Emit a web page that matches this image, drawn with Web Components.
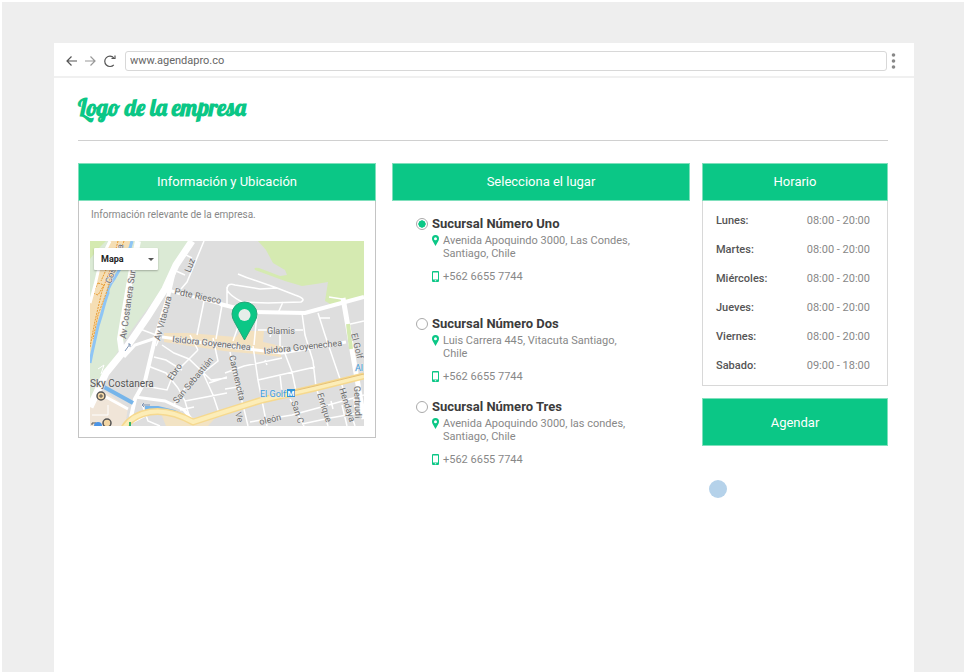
<!DOCTYPE html>
<html lang="es">
<head>
<meta charset="utf-8">
<meta name="viewport" content="width=device-width, initial-scale=1">
<title>AgendaPro</title>
<style>
  body {
    margin: 0;
    padding: 2px 2px 0;
    background: #fff;
    color: #888;
    font: 11px/13px Roboto, "Liberation Sans", sans-serif;
    --green: #0bc786;
    --line: #d8d8d8;
  }
  .stage {
    box-sizing: border-box;
    display: flex;
    min-height: calc(100vh - 2px);
    padding: 41px 50px 0 52px;
    background: #eee;
  }
</style>
</head>
<body>

<div class="stage">
  <browser-window url="www.agendapro.co">
    <company-page>
      <info-panel slot="main" heading="Información y Ubicación" framed>
        <p>Información relevante de la empresa.</p>
        <location-map></location-map>
      </info-panel>
      <info-panel slot="main" heading="Selecciona el lugar">
        <branch-picker></branch-picker>
      </info-panel>
      <info-panel slot="side" heading="Horario" framed>
        <opening-hours></opening-hours>
      </info-panel>
      <book-button slot="side">Agendar</book-button>
      <touch-dot slot="side"></touch-dot>
    </company-page>
  </browser-window>
</div>

<script>
class BaseElement extends HTMLElement {
  constructor() {
    super()
    this.attachShadow({ mode: 'open' })
  }

  connectedCallback() {
    this.shadowRoot.innerHTML = this.render()
  }
}

class BrowserWindow extends BaseElement {
  render() {
    return `
      <style>
        :host { display: block; flex: 1; min-width: 0; background: #fff; }
        header {
          box-sizing: border-box;
          display: flex;
          align-items: center;
          height: 35px;
          padding: 2px 18px 0 12px;
          border-bottom: 2px solid #f0f0f0;
        }
        button { display: flex; padding: 0; border: 0; background: none; }
        .nav { display: flex; gap: 7px; margin-right: 9px; }
        svg { display: block; fill: none; stroke: #555; stroke-width: 1.200; }
        .forward svg { stroke: #999; }
        input {
          box-sizing: border-box;
          flex: 1;
          min-width: 0;
          height: 20px;
          margin-right: 4px;
          padding: 0 4px;
          border: 1px solid #d8d8d8;
          border-radius: 3px;
          color: #666;
          font: inherit;
        }
        .menu svg { fill: #888; stroke: none; }
      </style>
      <header>
        <div class="nav">
          <button aria-label="Atrás"><svg width="12" height="14" viewBox="0 0 12 14"><path d="M11 7H1M5.500 2.500L1 7L5.500 11.500"/></svg></button>
          <button class="forward" aria-label="Adelante"><svg width="12" height="14" viewBox="0 0 12 14"><path d="M0 7H10M5.500 2.500L10 7L5.500 11.500"/></svg></button>
          <button aria-label="Recargar"><svg width="12" height="14" viewBox="0 0 12 14"><path d="M9.800 3.800A5.200 5.200 0 1 0 9.800 10.800M11 1.500V4.500H7.500"/></svg></button>
        </div>
        <input type="text" aria-label="Dirección" value="${this.getAttribute('url')}">
        <button class="menu" aria-label="Menú"><svg width="5" height="18" viewBox="0 0 5 18"><circle cx="2.500" cy="3" r="1.800"/><circle cx="2.500" cy="9" r="1.800"/><circle cx="2.500" cy="15" r="1.800"/></svg></button>
      </header>
      <slot></slot>
    `
  }
}

class CompanyPage extends BaseElement {
  render() {
    return `
      <style>
        :host { display: block; padding: 14px 26px 24px 24px; }
        h1 {
          margin: 0 0 16px;
          color: var(--green);
          font: bold 23px/32px Lobster, "Liberation Serif", serif;
        }
        .columns {
          display: flex;
          gap: 12px;
          padding-top: 22px;
          border-top: 1px solid #d0d0d0;
        }
        main {
          flex: 1;
          display: grid;
          grid-template-columns: 1fr 1fr;
          gap: 16px;
          align-items: start;
        }
        aside { width: 186px; }
      </style>
      <h1>Logo de la empresa</h1>
      <div class="columns">
        <main><slot name="main"></slot></main>
        <aside><slot name="side"></slot></aside>
      </div>
    `
  }
}

class InfoPanel extends BaseElement {
  render() {
    return `
      <style>
        :host { display: block; }
        h2 {
          margin: 0;
          border: 1px solid #7fe0bc;
          background: var(--green);
          color: #fff;
          font-size: 13px;
          font-weight: 400;
          line-height: 36px;
          text-align: center;
        }
        :host([framed]) .body { border: 1px solid var(--line); border-top: 0; }
        :host([slot="main"][framed]) .body { padding: 7px 11px 11px; border-color: #c4c4c4; }
        ::slotted(p) { margin: 0 1px 20px; font-size: 10px; }
      </style>
      <h2>${this.getAttribute('heading')}</h2>
      <div class="body"><slot></slot></div>
    `
  }
}

class LocationMap extends BaseElement {
  render() {
    return `
      <style>
        :host { display: block; position: relative; }
        svg { display: block; width: 100%; }
        select {
          position: absolute;
          left: 4px;
          top: 7px;
          width: 64px;
          height: 22px;
          padding: 0 7px;
          border: 0;
          border-radius: 1px;
          appearance: none;
          background: #fff;
          box-shadow: 0 1px 2px #0004;
          color: #222;
          font: bold 9px/22px Roboto, "Liberation Sans", sans-serif;
        }
        .caret { position: absolute; left: 58px; top: 17px; width: 6px; pointer-events: none; }
        text { fill: #6c6c6c; stroke: #e8e8e8; stroke-width: 1px; paint-order: stroke; font-size: 9px; }
        .street { fill: none; stroke: #fff; }
        .metro { fill: #3d9bdc; }
        .place { fill: #555; font-size: 10px; }
        .sign { fill: #fff; stroke: none; font-size: 8px; font-weight: 700; }
      </style>
      <svg viewBox="0 0 274 185" role="img" aria-label="Mapa de la zona de El Golf">
        <rect width="274" height="185" fill="#dedede"/>
        <!-- parks -->
        <path fill="#dbead5" d="M38 0H103L75 44L38 94L10 140L0 160V0Z"/>
        <path fill="#d5eab1" d="M0 0H16L8 8L0 18ZM168 0H274V57L252 63L242 64L235 60L238 41L226 43L212 45L195 40L165 29Q163 26 169 27L190 35L197 34L195 29L183 22L176 9Z"/>
        <!-- west bank: rail yard and river -->
        <path fill="#f5deb4" d="M20 0H42L34 14L24 38L15 58L7 88L0 112V58L6 40L12 20Z"/>
        <path fill="none" stroke="#8ec5f5" stroke-width="3" d="M42 0L38 14L24 38Q17 48 18 52Q15 60 12 72L8 85L2 112L0 122"/>
        <path fill="none" stroke="#e89b32" stroke-dasharray="2 1" d="M28 0L22 24L12 50L5 80L0 106M34 0L26 22L17 50L8 74L3 98M8 42L14 44L8 54L3 52ZM20 20L11 40M24 26L18 44"/>
        <path class="street" stroke-width="3" d="M20 0L11 18L5 44L0 62"/>
        <path class="street" stroke-width="6" d="M48 0L42 28L36 62L30 98L32 112"/>
        <!-- commercial strips -->
        <path fill="#f3e1c0" d="M74 92H98L146 96L151 90H174L173 101L191 105V116L166 113L134 110L74 101Z"/>
        <path fill="#f0e5d8" d="M0 158L16 151L38 167L35 185H0Z"/>
        <path fill="#f2e3c4" d="M70 170L90 171L104 177L128 174L118 185H76Z"/>
        <!-- small streets -->
        <path class="street" stroke-width="1.500" d="M148 33Q157 37 164 39L187 47L205 54Q217 58 211 61L178 62L152 61Q139 54 137 49Q137 41 145 44L170 48L187 47M137 46V63M193 61L188 72M239 56L252 58
          M92 12L102 17M86 30L95 34M114 0L97 41L91 48M50 88L66 94M114 60L107 94M132 64L126 98
          M212 72L215 94L223 120L226 146L238 185M228 72L235 94L250 138L265 185M230 77L240 77M256 84L274 80
          M167 72L164 104M150 80L143 100M168 89H213M190 90V105M182 90L180 96M135 132L154 125L192 117M192 105L202 131L206 150
          M140 111L146 138L153 164L158 185M163 105L168 139L177 185M168 139L225 126M190 134L192 152M175 119L177 124
          M135 148L148 146M200 158L214 185M160 181L202 174L235 165L274 154M212 183L240 177L274 171M243 168L241 160M252 164L257 185M264 158L266 175
          M72 104L84 112L99 118L121 139L137 137M64 116L76 119L92 129M58 125L76 132L88 147M55 145L77 149L83 134L99 118L108 109
          M123 97L128 120L113 132L95 147L83 165M95 160L137 152M113 132L123 154L130 175M88 147L95 160L100 178M119 142L137 136M72 91L66 105M100 94L108 109
          M52 163L58 180L70 185M90 169L104 166"/>
        <path class="street" stroke-width="3" d="M72 96L102 100L140 106L192 112L245 103L256 101M75 48L88 52L112 58L135 64M5 150L38 168M45 156L75 160L94 169L103 180M36 184L58 173"/>
        <!-- avenues -->
        <path class="street" stroke-width="4" d="M130 63L162 71L215 72L244 64L274 56M84 30L78 56L65 98L55 140L45 158L39 185"/>
        <path class="street" stroke-width="7" d="M102 0L86 24L75 48L58 75L34 110L16 132L0 166"/>
        <path class="street" stroke-width="3" d="M34 116L45 104L66 97"/>
        <path class="street" stroke-width="5" d="M253 57L257 80L266 132L274 178"/>
        <path fill="none" stroke="#d5eab1" stroke-width="4" d="M258 83L261 108"/>
        <path fill="none" stroke="#76b5ea" stroke-width="4" d="M14 146L43 162M55 167H68L84 171L101 179"/>
        <path fill="none" stroke="#f6d98f" stroke-width="7" stroke-linejoin="round" d="M34 187Q42 174 60 171Q80 168 103 181L137 170L172 159L225 147L274 135"/>
        <path fill="none" stroke="#fcedb8" stroke-width="4" stroke-linejoin="round" d="M34 187Q42 174 60 171Q80 168 103 181L137 170L172 159L225 147L274 135"/>
        <path fill="none" stroke="#e5c078" d="M190 153L225 145L274 133"/>
        <path fill="none" stroke="#8196b4" d="M35 110L40 103M38 103H40V106M52 164H60M54 162L52 164L54 166"/>
        <path fill="none" stroke="#fff" d="M8 128L14 124L11 133M2 174H18V164"/>
        <!-- labels -->
        <text transform="translate(21 43) rotate(-72)">Costanera</text>
        <text transform="translate(36 98) rotate(-82)">Av Costanera Sur</text>
        <text transform="translate(70 100) rotate(-75)">Av Vitacura</text>
        <text transform="translate(100 32) rotate(-68)">Luz</text>
        <text transform="translate(84 53) rotate(12)">Pdte Riesco</text>
        <text x="177" y="93">Glamis</text>
        <text transform="translate(82 101) rotate(6)">Isidora Goyenechea</text>
        <text transform="translate(174 113) rotate(-6)">Isidora Goyenechea</text>
        <text transform="translate(82 140) rotate(-55)">Ebro</text>
        <text transform="translate(87 163) rotate(-50)">San Sebastián</text>
        <text transform="translate(139 115) rotate(77)">Carmencita</text>
        <text transform="translate(261 93) rotate(76)">El Golf</text>
        <text transform="translate(227 153) rotate(72)">Enrique</text>
        <text transform="translate(249 148) rotate(72)">Hendaya</text>
        <text transform="translate(264 145) rotate(88)">Gertrudi</text>
        <text transform="translate(201 161) rotate(72)">San C</text>
        <text transform="translate(145 172) rotate(75)">Ve</text>
        <text transform="translate(170 184) rotate(-13)">oleón</text>
        <text class="metro" x="170" y="156">El Golf</text>
        <text class="metro" x="265" y="130">Al</text>
        <text class="place" x="0" y="146">Sky Costanera</text>
        <rect x="197" y="148" width="8" height="8" fill="#2f93d8"/>
        <text class="sign" x="201" y="155" text-anchor="middle">M</text>
        <g fill="#f3d6a4" stroke="#555" stroke-width="1.500">
          <circle cx="11" cy="155" r="4"/><circle cx="17" cy="182" r="4"/>
        </g>
        <path fill="none" stroke="#555" d="M9 155H13M11 153V157M2 184V182H6"/>
        <circle cx="8" cy="185" r="4" fill="#4b94e6"/>
        <rect x="39" y="181" width="2" height="4" fill="#35b36b"/>
        <!-- pin -->
        <path fill="#0bc786" stroke="#26a578" d="M154.500 99L144.500 81Q142 77 142 73A12.500 12 0 0 1 167 73Q167 77 164.500 81Z"/>
        <circle cx="154.500" cy="74" r="6" fill="#e6eee9"/>
      </svg>
      <select aria-label="Tipo de mapa"><option>Mapa</option></select>
      <svg class="caret" viewBox="0 0 6 3"><path fill="#555" d="M0 0H6L3 3Z"/></svg>
    `
  }
}

class BranchPicker extends BaseElement {
  render() {
    const branches = [
      ['Sucursal Número Uno', 'Avenida Apoquindo 3000, Las Condes, Santiago, Chile'],
      ['Sucursal Número Dos', 'Luis Carrera 445, Vitacuta Santiago, Chile'],
      ['Sucursal Número Tres', 'Avenida Apoquindo 3000, las condes, Santiago, Chile']
    ]
    return `
      <style>
        :host { display: block; padding: 15px 54px 0 24px; }
        .branch {
          display: grid;
          grid-template-columns: 12px 1fr;
          column-gap: 4px;
          margin-bottom: 16px;
        }
        .branch:first-of-type { margin-bottom: 33px; }
        input {
          appearance: none;
          box-sizing: border-box;
          width: 12px;
          height: 12px;
          margin: 2px 0;
          border: 1px solid #aaa;
          border-radius: 50%;
          background: #fff;
        }
        input:checked { background: radial-gradient(circle, var(--green) 48%, #fff 55%); }
        label { color: #3c3c3c; font-size: 13px; font-weight: 700; line-height: 16px; }
        .details { grid-column: 2; }
        p { display: grid; grid-template-columns: 7px 1fr; column-gap: 4px; margin: 0; }
        .address { margin: 2px 0 10px; }
        svg { display: block; margin-top: 1px; fill: var(--green); }
      </style>
      ${branches.map(([name, address], i) => `
        <div class="branch">
          <input type="radio" name="branch" id="branch${i}" ${i === 0 ? 'checked' : ''}>
          <label for="branch${i}">${name}</label>
          <div class="details">
            <p class="address">
              <svg width="7" height="11" viewBox="0 0 7 11"><path fill-rule="evenodd" d="M3.500 11L.8 6.300Q0 5 0 3.500A3.500 3.500 0 0 1 7 3.500Q7 5 6.200 6.300ZM3.500 2.200A1.500 1.500 0 1 0 3.500 5.200A1.500 1.500 0 1 0 3.500 2.200Z"/></svg>
              <span>${address}</span>
            </p>
            <p>
              <svg width="7" height="11" viewBox="0 0 7 11"><path fill-rule="evenodd" d="M1 0H6Q7 0 7 1V10Q7 11 6 11H1Q0 11 0 10V1Q0 0 1 0ZM1 1.500V8.500H6V1.500ZM2.800 9.300V10.200H4.200V9.300Z"/></svg>
              <span>+562 6655 7744</span>
            </p>
          </div>
        </div>
      `).join('')}
    `
  }
}

class OpeningHours extends BaseElement {
  render() {
    const days = [
      ['Lunes:', '08:00 - 20:00'],
      ['Martes:', '08:00 - 20:00'],
      ['Miércoles:', '08:00 - 20:00'],
      ['Jueves:', '08:00 - 20:00'],
      ['Viernes:', '08:00 - 20:00'],
      ['Sabado:', '09:00 - 18:00']
    ]
    return `
      <style>
        :host { display: block; padding: 5px 17px 5px 13px; }
        table { width: 100%; border-collapse: collapse; }
        th, td { height: 29px; padding: 0; }
        th { color: #555; font-weight: 500; text-align: left; }
        td { text-align: right; }
      </style>
      <table>
        ${days.map(([day, hours]) => `<tr><th scope="row">${day}</th><td>${hours}</td></tr>`).join('')}
      </table>
    `
  }
}

class BookButton extends BaseElement {
  render() {
    return `
      <style>
        :host { display: block; margin-top: 12px; }
        button {
          width: 100%;
          height: 48px;
          padding: 0;
          border: 1px solid #7fe0bc;
          background: var(--green);
          color: #fff;
          font: inherit;
          font-size: 13px;
        }
      </style>
      <button><slot></slot></button>
    `
  }
}

class TouchDot extends BaseElement {
  render() {
    return `
      <style>
        :host {
          display: block;
          width: 18px;
          height: 18px;
          margin: 34px 7px 0;
          border-radius: 50%;
          background: #b5d2ea;
        }
      </style>
    `
  }
}

customElements.define('browser-window', BrowserWindow)
customElements.define('company-page', CompanyPage)
customElements.define('info-panel', InfoPanel)
customElements.define('location-map', LocationMap)
customElements.define('branch-picker', BranchPicker)
customElements.define('opening-hours', OpeningHours)
customElements.define('book-button', BookButton)
customElements.define('touch-dot', TouchDot)
</script>
</body>
</html>
